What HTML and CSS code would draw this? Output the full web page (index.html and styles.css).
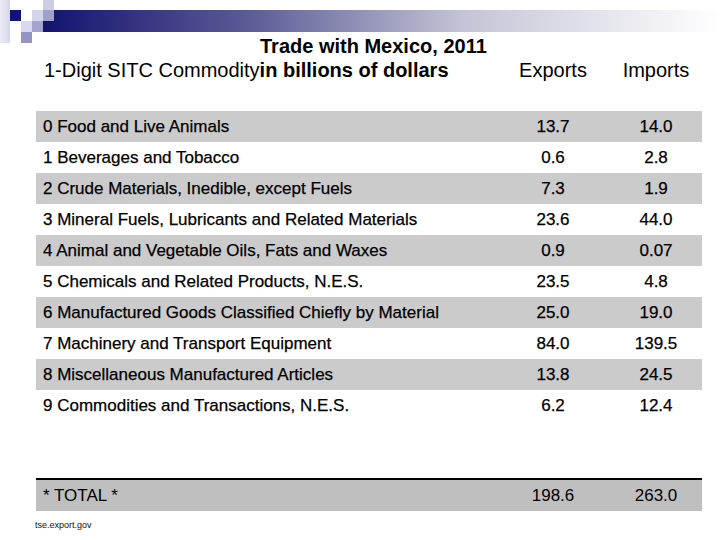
FILE: index.html
```html
<!DOCTYPE html>
<html>
<head>
<meta charset="utf-8">
<link rel="stylesheet" href="styles.css">
</head>
<body>
<div class="slide">
  <svg class="banner" width="720" height="44" viewBox="0 0 720 44">
    <defs>
      <linearGradient id="bar" x1="0" y1="0" x2="1" y2="0">
        <stop offset="0" stop-color="#13136f"/>
        <stop offset="0.3" stop-color="#5a5a96"/>
        <stop offset="0.62" stop-color="#c4c4d6"/>
        <stop offset="1" stop-color="#ffffff"/>
      </linearGradient>
      <linearGradient id="fade" x1="0" y1="0" x2="1" y2="0">
        <stop offset="0" stop-color="#ececf6"/>
        <stop offset="1" stop-color="#d6d6ec"/>
      </linearGradient>
    </defs>
    <rect x="43" y="10" width="677" height="22" fill="url(#bar)"/>
    <rect x="0" y="0" width="10" height="43" fill="url(#fade)"/>
    <rect x="10" y="10" width="11" height="11" fill="#131373"/>
    <rect x="32" y="10" width="11" height="11" fill="#d4d4ea"/>
    <rect x="43" y="0" width="11" height="10" fill="#cdcde6"/>
    <rect x="43" y="10" width="11" height="11" fill="#a0a0cc"/>
    <rect x="21" y="21" width="11" height="11" fill="#d8d8ee"/>
    <rect x="32" y="21" width="11" height="11" fill="#a4a4cf"/>
    <rect x="21" y="32" width="11" height="11" fill="#9494c4"/>
  </svg>

  <div class="head">
    <div class="head-title">
      <div class="line1">Trade with Mexico, 2011</div>
      <div class="line2">1-Digit SITC Commodity<b>in billions of dollars</b></div>
    </div>
    <div class="head-col">Exports</div>
    <div class="head-col imp">Imports</div>
  </div>

  <div class="table">
    <div class="row gray"><span class="label">0 Food and Live Animals</span><span class="num">13.7</span><span class="num imp">14.0</span></div>
    <div class="row"><span class="label">1 Beverages and Tobacco</span><span class="num">0.6</span><span class="num imp">2.8</span></div>
    <div class="row gray"><span class="label">2 Crude Materials, Inedible, except Fuels</span><span class="num">7.3</span><span class="num imp">1.9</span></div>
    <div class="row"><span class="label">3 Mineral Fuels, Lubricants and Related Materials</span><span class="num">23.6</span><span class="num imp">44.0</span></div>
    <div class="row gray"><span class="label">4 Animal and Vegetable Oils, Fats and Waxes</span><span class="num">0.9</span><span class="num imp">0.07</span></div>
    <div class="row"><span class="label">5 Chemicals and Related Products, N.E.S.</span><span class="num">23.5</span><span class="num imp">4.8</span></div>
    <div class="row gray"><span class="label">6 Manufactured Goods Classified Chiefly by Material</span><span class="num">25.0</span><span class="num imp">19.0</span></div>
    <div class="row"><span class="label">7 Machinery and Transport Equipment</span><span class="num">84.0</span><span class="num imp">139.5</span></div>
    <div class="row gray"><span class="label">8 Miscellaneous Manufactured Articles</span><span class="num">13.8</span><span class="num imp">24.5</span></div>
    <div class="row tall"><span class="label">9 Commodities and Transactions, N.E.S.</span><span class="num">6.2</span><span class="num imp">12.4</span></div>
    <div class="row total"><span class="label">* TOTAL *</span><span class="num">198.6</span><span class="num imp">263.0</span></div>
  </div>

  <div class="source">tse.export.gov</div>
</div>
</body>
</html>
```

FILE: styles.css
```css
html, body {
  margin: 0;
  padding: 0;
  background: #ffffff;
}

body {
  font-family: "Liberation Sans", Arial, sans-serif;
  color: #000000;
}

.slide {
  position: relative;
  width: 720px;
  height: 540px;
  padding-top: 34px;
  box-sizing: border-box;
  overflow: hidden;
}

.banner {
  position: absolute;
  left: 0;
  top: 0;
  display: block;
}

.head {
  position: relative;
  margin-left: 36px;
  display: grid;
  grid-template-columns: 464px 106px 96px;
  font-size: 20px;
  line-height: 24px;
}

.head-title .line1 {
  font-weight: bold;
  padding-left: 224px;
}

.head-title .line2 {
  padding-left: 8px;
  white-space: nowrap;
}

.head-col {
  align-self: end;
  text-align: center;
}

.head-col.imp {
  padding-left: 4px;
}

.table {
  margin-left: 36px;
  margin-top: 29px;
  width: 666px;
}

.row {
  display: grid;
  grid-template-columns: 464px 106px 96px;
  height: 31px;
  align-items: center;
  font-size: 17px;
  line-height: 31px;
  -webkit-text-stroke: 0.25px #000000;
}

.row.gray {
  background: #cbcbcb;
}

.row.tall {
  height: 88px;
  align-items: start;
}

.row.total {
  background: #bfbfbf;
  border-top: 2px solid #000000;
  height: 31px;
  -webkit-text-stroke: 0;
}

.label {
  padding-left: 7px;
  white-space: nowrap;
}

.num {
  text-align: center;
}

.num.imp {
  padding-left: 4px;
}

.source {
  margin-left: 35px;
  margin-top: 9px;
  font-size: 9px;
  line-height: 10px;
  color: #111111;
}
```
